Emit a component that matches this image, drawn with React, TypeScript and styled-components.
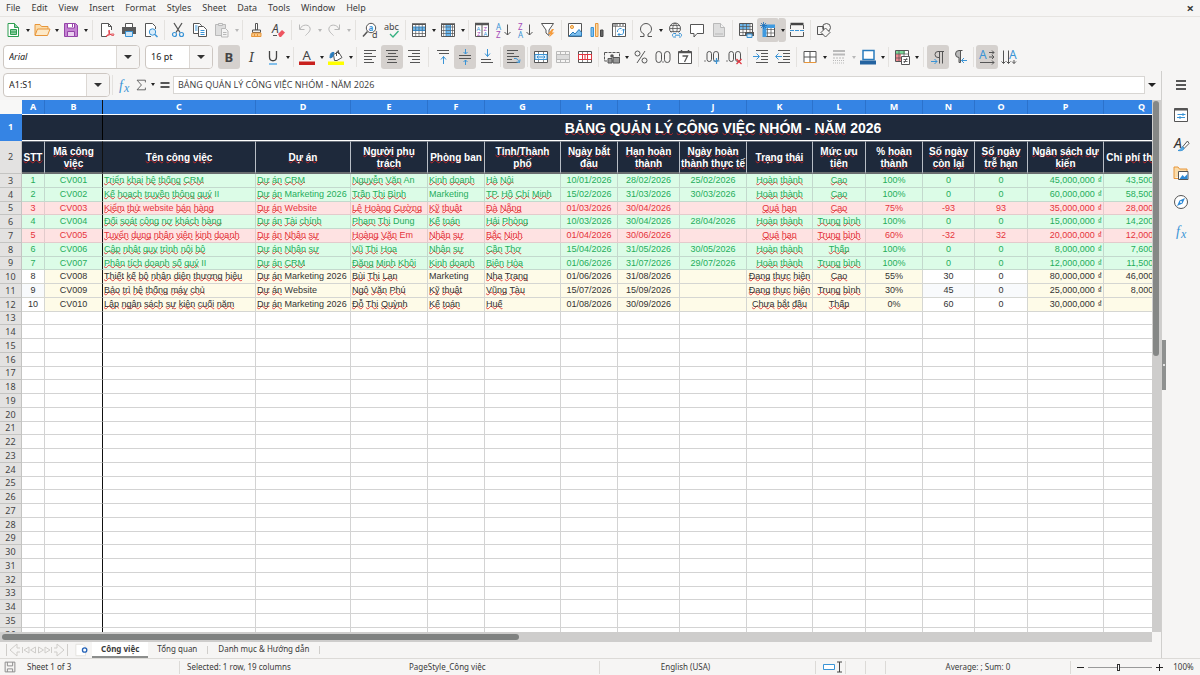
import React from "react";
import styled, { createGlobalStyle, css } from "styled-components";

const GlobalStyle = createGlobalStyle`
  * { box-sizing: border-box; }
  html, body, #root { height: 100%; margin: 0; }
  body {
    background: #f6f5f4;
    color: #3a3a3a;
    font: 9px/12px "Noto Sans", sans-serif;
    overflow: hidden;
  }
  button, input { font: inherit; color: inherit; }
  button { border: 0; padding: 0; background: none; }
`;

const ui = {
  line: "#dcdad7",
  active: "#d5d1ce",
  ink: "#555555",
  blue: "#3a94d6",
  accent: "#3584e4",
  navy: "#1e293b",
};

/* ---------- icons ---------- */

const K = ui.ink;
const B = ui.blue;
const F = "#b9b9b9";

const lines = (rows: [number, number, number][], color = K) =>
  rows.map(([x, y, w], i) => <path key={i} d={`M${x} ${y}.5h${w}`} stroke={color} />);

const icons: Record<string, React.ReactNode> = {
  new: (
    <>
      <path d="M3 1.500h6.500l4 4v9H3z" fill="#fff" stroke="#2f9e52" />
      <path d="M9.500 1.500v4h4" fill="#8fd0a3" stroke="#2f9e52" />
      <path d="M5.500 7.500h6v5h-6zM5.500 10h6" fill="#8fd0a3" stroke="#2f9e52" />
    </>
  ),
  open: (
    <>
      <path d="M1 13V2.500h5l1.500 2H14V7" fill="#fbdcaa" stroke="#e8963a" />
      <path d="M1 13.500 3.500 7H16l-2.500 6.500z" fill="#fde9c8" stroke="#e8963a" />
    </>
  ),
  save: (
    <>
      <path d="M1.500 1.500h11l2 2v11h-13z" fill="#c583d3" stroke="#9544a8" />
      <path d="M4.500 1.500h7v4.500h-7z" fill="#fff" stroke="#9544a8" />
      <path d="M4.500 9.500h7v5h-7z" fill="#ead0f0" stroke="#9544a8" />
      <path d="M9.500 2v3" stroke="#9544a8" />
    </>
  ),
  pdf: (
    <>
      <path d="M8 14.500H2.500v-13h7l3 3V8" fill="#fff" stroke={K} />
      <path d="M9.500 1.500v3h3" stroke={K} />
      <path d="M7 14.500c3-2 4-4.500 3.500-6-1-1.500-1.500 2 1 4 2 1.500 4 1 3.500 0s-4-.500-8 2z" stroke="#e0353f" />
    </>
  ),
  print: (
    <>
      <path d="M4.500 5V1.500h7V5" fill="#fff" stroke={K} />
      <path d="M1 5h14v7H1z" fill="#5a5a5a" />
      <path d="M4.500 9.500h7v5h-7z" fill="#cfe6f7" stroke={B} />
    </>
  ),
  preview: (
    <>
      <path d="M8 14.500H2.500v-13h7l3 3V7" fill="#fff" stroke={K} />
      <circle cx="9.500" cy="10" r="3.200" fill="#d8ecfa" stroke={B} />
      <path d="m12 12.500 2.500 2.500" stroke={B} strokeWidth="1.500" />
    </>
  ),
  cut: (
    <>
      <path d="M4 1l6 9.500M12 1 6 10.500" stroke={K} strokeWidth="1.300" />
      <circle cx="4.500" cy="12.500" r="2" stroke={B} strokeWidth="1.200" />
      <circle cx="11.500" cy="12.500" r="2" stroke={B} strokeWidth="1.200" />
    </>
  ),
  copy: (
    <>
      <path d="M1.500 1.500h6l2 2v8h-8z" fill="#fff" stroke={K} />
      <path d="M6.500 4.500h5l3 3v7h-8z" fill="#fff" stroke={K} />
      <path d="M3 4h2.500M3 6h2.500M3 8h2.500M8.500 8.500h4M8.500 10.500h4M8.500 12.500h4" stroke={B} />
    </>
  ),
  paste: (
    <>
      <path d="M1.500 2.500h10v11h-10z" fill="#dedede" stroke={F} />
      <path d="M4.500 1.500h4v2h-4z" fill="#eee" stroke={F} />
      <path d="M7.500 6.500h4l2.500 2.500v6H7.500z" fill="#f4f4f4" stroke={F} />
      <path d="M9 10.500h3.500M9 12.500h3.500" stroke={F} />
    </>
  ),
  brush: (
    <>
      <path d="M7.500 1.500h2V8h-2z" fill="#fff" stroke={K} />
      <path d="M4.500 8h8v2.500h-8z" fill="#eee" stroke={K} />
      <path d="M4 11h9v3.500H3.500z" fill="#fbc987" stroke="#e8963a" />
      <path d="M6.500 12v2.500M9.500 12v2.500" stroke="#e8963a" />
    </>
  ),
  clear: (
    <>
      <text x="2" y="11" fontSize="12" fontStyle="italic" fill="#444">A</text>
      <path d="m8 12 4-4 3 2.500-4 4.500h-1.500z" fill="#ee5560" />
      <path d="M3 13.500h4" stroke={K} />
    </>
  ),
  undo: <path d="M2.500 2.500v5h5M3 7c2-5 9-5 10-1 .800 3-2 5-4.500 7.500" stroke="#b8b8b8" />,
  redo: <path d="M13.500 2.500v5h-5M13 7C11 2 4 2 3 6c-.800 3 2 5 4.500 7.500" stroke="#b8b8b8" />,
  find: (
    <>
      <circle cx="9" cy="6" r="4.700" fill="#fff" stroke={K} />
      <path d="M5.500 9.500 1 14.500" stroke={K} strokeWidth="1.500" />
      <text x="6.500" y="8.500" fontSize="8" fontWeight="bold" fill={B}>a</text>
      <text x="10" y="16" fontSize="9" fill="#444">d</text>
    </>
  ),
  spell: (
    <>
      <text x="0" y="8" fontSize="9" fill="#444">abc</text>
      <path d="m6 12 3 3 5.500-6" stroke="#35b080" strokeWidth="1.300" />
    </>
  ),
  rows: (
    <>
      <path d="M1.500 1.500h13v13h-13z" fill="#fff" />
      <path d="M1.500 5h13v4h-13z" fill="#6db7ec" />
      <path d="M4.700 2v12.500M8 2v12.500M11.300 2v12.500M1.500 11.500h13" stroke={K} strokeWidth=".7" />
      <path d="M1.500 5h13M1.500 8.500h13" stroke="#2a7cbd" strokeWidth=".8" />
      <path d="M1.500 2.500h13v12h-13z" stroke={K} />
      <path d="M1 2h14" stroke={K} strokeWidth="1.500" />
    </>
  ),
  cols: (
    <>
      <path d="M1.500 1.500h13v13h-13z" fill="#fff" />
      <path d="M6 2h4.500v12.500H6z" fill="#6db7ec" />
      <path d="M1.500 5h13M1.500 8.500h13M1.500 11.500h13M3.700 2v12.500M12.500 2v12.500" stroke={K} strokeWidth=".7" />
      <path d="M6 2v12.500M10.500 2v12.500" stroke="#2a7cbd" strokeWidth=".8" />
      <path d="M1.500 2.500h13v12h-13z" stroke={K} />
      <path d="M1 2h14" stroke={K} strokeWidth="1.500" />
    </>
  ),
  sort: (
    <>
      <path d="M1.500 1.500h13v13h-13z" fill="#fff" stroke={K} />
      <path d="M1 2h14" stroke={K} strokeWidth="2.500" />
      <path d="M8 2v12.500" stroke={K} />
      <text x="2.500" y="8.500" fontSize="6" fill={B}>A</text>
      <text x="3" y="14" fontSize="6" fill="#a44bb8">Z</text>
      <text x="9.500" y="8.500" fontSize="6" fill="#a44bb8">Z</text>
      <text x="9.500" y="14" fontSize="6" fill={B}>A</text>
    </>
  ),
  asc: (
    <>
      <text x="0" y="7.500" fontSize="8" fill={B}>A</text>
      <text x="0" y="15.500" fontSize="8" fill="#a44bb8">Z</text>
      <path d="M11.500 2.500v10.500m-3-3 3 3 3-3" stroke={K} />
    </>
  ),
  desc: (
    <>
      <text x="0" y="7.500" fontSize="8" fill="#a44bb8">Z</text>
      <text x="0" y="15.500" fontSize="8" fill={B}>A</text>
      <path d="M11.500 2.500v10.500m-3-3 3 3 3-3" stroke={K} />
    </>
  ),
  filter: (
    <>
      <path d="M1.500 1.500h12L9 8v5.500L6 11V8z" fill="#fff" stroke={K} />
      <path d="m12 7-4 5h2.500L9 15.500l5.500-5H12L14 7z" fill="#f59b3c" />
    </>
  ),
  image: (
    <>
      <path d="M1.500 1.500h13v13h-13z" fill="#fff" stroke={K} />
      <circle cx="5" cy="5" r="1.600" fill="#fbd18a" stroke="#e8963a" />
      <path d="m2 14 4-4 2 2 4-4.500 2.500 3V14z" fill="#7fc0ee" stroke="#2a7cbd" />
    </>
  ),
  chart: (
    <>
      <path d="M2 5.500h2.500v9H2z" fill="#7fc0ee" stroke={B} />
      <path d="M6.500 1.500H9v13H6.500z" fill="#fbd9a4" stroke="#e8963a" />
      <path d="M11.500 8H14v6.500h-2.500z" fill="#666" stroke="#444" />
    </>
  ),
  pivot: (
    <>
      <path d="M1.500 1.500h13v13h-13z" fill="#fff" stroke={K} />
      <path d="M2 4.500h12.500M4.500 2v12.500" stroke={K} strokeWidth=".6" />
      <path d="M2 3h12.500" stroke={K} strokeDasharray="2 1" />
      <path d="M7 12.500h3.500c1.500 0 2-1 2-2.500V7M11 8.500 12.500 7 14 8.500M8.500 11 7 12.500 8.500 14M6.500 10C6 8 8 6 10.500 6.500" stroke={B} />
    </>
  ),
  omega: <path d="M2 14.500h4V12C3.500 11 2.500 9 2.500 7a5.500 5.500 0 0 1 11 0c0 2-1 4-3.500 5v2.500h4" stroke={K} />,
  link: (
    <>
      <circle cx="8" cy="6.500" r="5.500" stroke={K} />
      <path d="M2.500 6.500h11M8 1c-3 3-3 8 0 11M8 1c3 3 3 8 0 11M3.500 3.500h9M3.500 9.500h9" stroke={K} strokeWidth=".8" />
      <path d="M4 10.500h12V16H4z" fill="#f6f5f4" />
      <path d="M9 11.500H6.500a2 2 0 0 0 0 3.500H9M12 11.500h1.500a2 2 0 0 1 0 3.500H12M8 13.200h5" stroke={B} />
    </>
  ),
  comment: <path d="M1.500 2.500h13v9H8l-3 3.500v-3.500H1.500z" fill="#fff" stroke={K} />,
  headfoot: (
    <>
      <path d="M2.500 1.500h7l4 4v9h-11z" fill="#dedede" stroke={F} />
      <path d="M9.500 1.500v4h4" fill="#f4f4f4" stroke={F} />
      <path d="M4 12h8" stroke={F} />
    </>
  ),
  printrange: (
    <>
      <path d="M1.500 1.500h10v6h-10z" fill="#6db7ec" />
      <path d="M1.500 1.500h13v12h-13z" stroke={K} />
      <path d="M1.500 4.500h13M1.500 7.500h13M1.500 10.500h13M5 1.500v12M8.500 1.500v12M12 1.500v12" stroke={K} strokeWidth=".7" />
      <path d="M7 10h9v4H7z" fill="#555" />
      <path d="M9 12h5v3.500H9z" fill="#cfe6f7" stroke={B} />
    </>
  ),
  freeze: (
    <>
      <path d="M3.500 3.500h11v11h-11z" fill="#fff" stroke={K} />
      <path d="M3.500 7.500h11M3.500 11h11M7.500 3.500v11M11 3.500v11" stroke={K} strokeWidth=".7" />
      <path d="M3 2.500h12v3.500H3zM2.500 3h4v12h-4z" fill="#3f9ae0" />
      <path d="M3.500 0v7M0 3.500h7M1 1l5 5M6 1 1 6" stroke="#2070b8" strokeWidth=".8" />
    </>
  ),
  split: (
    <>
      <path d="M1.500 2h13" stroke="#444" strokeWidth="2.500" />
      <path d="M1.500 3v4M14.500 3v4M1.500 10v4.500h13V10" stroke={K} />
      <path d="M1 8.500h14" stroke={B} strokeDasharray="4 1" />
    </>
  ),
  shapes: (
    <>
      <circle cx="10.500" cy="5.500" r="4" stroke={K} />
      <path d="M1.500 4.500h6v8h-6z" stroke={K} />
      <path d="m9.500 6 4.500 4.500L9.500 15 5 10.500z" fill="#f6f5f4" stroke={K} />
    </>
  ),
  bold: <text x="3.500" y="13" fontSize="13" fontWeight="bold" fill="#444">B</text>,
  italic: <text x="6" y="13" fontSize="13" fontStyle="italic" fontFamily="DejaVu Serif, serif" fill="#444">I</text>,
  underline: (
    <>
      <path d="M4.500 2v6c0 5 7 5 7 0V2" stroke="#444" strokeWidth="1.300" />
      <path d="M4 15h8" stroke="#5eaee8" strokeWidth="1.500" />
    </>
  ),
  fontcolor: (
    <>
      <text x="3.500" y="11" fontSize="13" fill="#444">A</text>
      <path d="M0 12.500h16v3.500H0z" fill="#c9211e" />
    </>
  ),
  fill: (
    <>
      <path d="m5.500 5.500 5-2.500 3.500 5.500-5 3H6.500z" fill="#fff" stroke={K} />
      <path d="M10.500 5V1.500L8.500 3v4" stroke={K} />
      <path d="M2 9c0-4 1-6 4-5.500L4.500 8z" fill="#2a7cbd" stroke="#2a7cbd" />
      <path d="M0 12.500h16v3.500H0z" fill="#ffff00" />
    </>
  ),
  alignl: lines([[2, 1, 12], [2, 4, 8], [2, 7, 12], [2, 10, 8], [2, 13, 10]]),
  alignc: lines([[2, 1, 12], [4, 4, 8], [2, 7, 12], [4, 10, 8], [3, 13, 10]]),
  alignr: lines([[2, 1, 12], [6, 4, 8], [2, 7, 12], [6, 10, 8], [4, 13, 10]]),
  top: (
    <>
      {lines([[2, 1, 12], [4, 4, 10]])}
      <path d="M8.500 15V7.500m-2.500 3 2.500-3 2.500 3" stroke={B} />
    </>
  ),
  middle: (
    <>
      {lines([[2, 6, 12], [2, 9, 12]])}
      <path d="M8.500 0v5m-2-2 2 2 2-2M8.500 16v-5m-2 2 2-2 2 2" stroke={B} />
    </>
  ),
  bottom: (
    <>
      {lines([[2, 10, 10], [2, 13, 12]])}
      <path d="M8.500 0v7.500m-2.500-3 2.500 3 2.500-3" stroke={B} />
    </>
  ),
  wrap: (
    <>
      {lines([[1, 1, 11], [1, 4, 7], [1, 7, 12], [1, 10, 5], [1, 13, 11]])}
      <path d="M8 9.500c3-.5 4 1 5.500 4m-3-.500 3 .5.500-3" stroke={B} />
    </>
  ),
  merge: (
    <>
      <path d="M1.500 2.500h13v11h-13z" fill="#fff" stroke={K} />
      <path d="M5.500 2.500v11M10.500 2.500v11M1.500 5.500h13M1.500 10.500h13" stroke={K} strokeWidth=".7" />
      <path d="M2 5.500h12v5H2z" fill="#e3f1fb" stroke={B} />
      <path d="M4 8h8M5.500 6.500 4 8l1.500 1.500M10.500 6.500 12 8l-1.500 1.500" stroke={B} />
    </>
  ),
  unmerge: (
    <>
      <path d="M1.500 2.500h13v11h-13zM5.500 2.500v11M10.500 2.500v11M1.500 5.500h13M1.500 10.500h13" stroke={F} />
      <path d="M2 6h12v4H2z" fill="#dcdcdc" />
    </>
  ),
  splitcells: (
    <>
      <path d="M1.500 2.500h13v11h-13z" fill="#fff" stroke={K} />
      <path d="M5.500 2.500v11M10.500 2.500v11" stroke={K} strokeWidth=".7" />
      <path d="M1.500 5.500h13v5h-13zM5.500 5.500v5M8 5.500v5M10.500 5.500v5" stroke="#e0353f" />
    </>
  ),
  currency: (
    <>
      <path d="M.5 3.500h15V12H.500z" stroke={K} strokeDasharray="3 1" />
      <circle cx="8" cy="7" r="1.800" fill={K} />
      <path d="M4 9.500h4V14H4zM9 8.500h6.500V14H9z" fill="#999" stroke={K} />
    </>
  ),
  percent: (
    <>
      <circle cx="4.500" cy="4.500" r="2.500" stroke={K} />
      <circle cx="11.500" cy="11.500" r="2.500" stroke={K} />
      <path d="M12 2 4 14" stroke={K} />
    </>
  ),
  number: (
    <>
      <rect x="1" y="2.500" width="5.500" height="11" rx="2.700" stroke={K} />
      <rect x="9.500" y="2.500" width="5.500" height="11" rx="2.700" stroke={K} />
      <circle cx="8" cy="13" r=".7" fill={K} />
    </>
  ),
  date: (
    <>
      <path d="M1.500 2.500h13v12h-13z" fill="#fff" stroke={K} />
      <path d="M1.500 3.500h13M4.500 1v3M11.500 1v3" stroke={K} strokeWidth="1.500" />
      <path d="M5.500 7h5l-3 6" stroke={K} strokeWidth="1.300" />
    </>
  ),
  adddec: (
    <>
      <circle cx="1" cy="12" r=".7" fill={K} />
      <rect x="3" y="2.500" width="4.500" height="10" rx="2.200" stroke={K} />
      <rect x="9.500" y="2.500" width="5" height="10" rx="2.400" stroke={K} />
      <path d="M12.500 9v6M9.500 12h6" stroke={B} strokeWidth="1.200" />
    </>
  ),
  deldec: (
    <>
      <circle cx="1" cy="12" r=".7" fill={K} />
      <rect x="3" y="2.500" width="4.500" height="10" rx="2.200" stroke={K} />
      <rect x="9.500" y="2.500" width="5" height="10" rx="2.400" stroke={K} />
      <path d="m10.500 10 5 5m0-5-5 5" stroke="#e0353f" strokeWidth="1.200" />
    </>
  ),
  indent: (
    <>
      {lines([[3, 1, 12], [8, 4, 7], [8, 7, 7], [8, 10, 7], [3, 13, 12]])}
      <path d="M0 7.500h6m-2.500-3 3 3-3 3" stroke={B} />
    </>
  ),
  outdent: (
    <>
      {lines([[3, 1, 12], [8, 4, 7], [8, 7, 7], [8, 10, 7], [3, 13, 12]])}
      <path d="M7 7.500H1m2.500-3-3 3 3 3" stroke={B} />
    </>
  ),
  borders: (
    <>
      <path d="M2 2.500h12v11H2zM8 2.500v11M2 8h12" fill="#fff" stroke={K} />
      <path d="M2 13.500h12" stroke="#e8963a" />
    </>
  ),
  borderstyle: (
    <>
      <path d="M2 2h12M2 5.500h12" stroke={F} strokeWidth="2" />
      <path d="M2 9h12" stroke={F} strokeDasharray="2 1" />
      <path d="M2 11.500h12M2 14h12" stroke={F} strokeDasharray="1 1" />
    </>
  ),
  bordercolor: (
    <>
      <path d="M3 1.500h11v9H3z" fill="#fff" stroke="#2a7cbd" strokeWidth="1.500" />
      <path d="M0 11.500h16v4H0z" fill="#2463a0" />
    </>
  ),
  conditional: (
    <>
      <path d="M1.500 1.500h13v11h-13z" fill="#fff" />
      <path d="M2 2h9v3H2z" fill="#7bd897" />
      <path d="M2 5h5v7.500H2z" fill="#f08a91" />
      <path d="M1.500 1.500h13v11h-13z" stroke={K} />
      <path d="M1.500 5h13M1.500 9h13M5 1.500v11M10 1.500v11" stroke={K} strokeWidth=".7" />
      <path d="M7.500 7.500h8v8h-8z" fill="#fff" stroke={K} />
      <path d="M9.500 10.500h4M9.500 12.500h4M13 9l-3 5" stroke={K} strokeWidth=".9" />
    </>
  ),
  ltr: (
    <>
      <path d="M14 2.500H8a3 3 0 0 0 0 6h1M9.500 2.500v12M12.500 2.500v12" stroke={K} />
      <path d="M1 12.500h6m-2.500-2.500L7 12.500 4.500 15" stroke={B} />
    </>
  ),
  rtl: (
    <>
      <path d="M8.500 1.500v12H7V8.500a3.500 3.500 0 0 1 0-7h3.500" fill="#bbb" stroke={K} />
      <path d="M15 11.500H9.500M12 9l-2.500 2.500L12 14" stroke={B} />
    </>
  ),
  texth: (
    <>
      <text x="0" y="10" fontSize="12" fill={B}>A</text>
      <path d="M10 3.500h5m-2-2 2 2-2 2M10 8h5m-2-2 2 2-2 2M1 13.500h14m-2-2 2 2-2 2" stroke={K} />
    </>
  ),
  textv: (
    <>
      <text x="8" y="10" fontSize="12" fill={B}>A</text>
      <path d="M2.500 1.500v13m-2-2 2 2 2-2M7.500 1.500v13m-2-2 2 2 2-2M13 11v3.500m-2-2 2 2 2-2" stroke={K} />
    </>
  ),
  fx: (
    <>
      <text x="3" y="13" fontSize="14" fontStyle="italic" fontFamily="Liberation Serif, serif" fill={B}>f</text>
      <text x="8" y="15" fontSize="12" fontStyle="italic" fontFamily="Liberation Serif, serif" fill={B}>x</text>
    </>
  ),
  sigma: <path d="M13 5V2.500H3.500L8.500 8l-5 5.500H13V11" stroke={K} />,
  equals: <path d="M3.500 6h9M3.500 10h9" stroke={K} strokeWidth="1.800" />,
  hamburger: <path d="M3 4h10M3 8h10M3 12h10" stroke="#222" strokeWidth="1.500" />,
  properties: (
    <>
      <path d="M1.500 1.500h13v13h-13z" fill="#fff" stroke={K} />
      <path d="M1.500 2.500h13" stroke={K} strokeWidth="2" />
      <path d="M4.500 7.500h8M4 10.500h8M10 6v3M7 9v3" stroke={B} />
    </>
  ),
  styles: (
    <>
      <text x="1" y="12" fontSize="14" fontStyle="italic" fill="#333">A</text>
      <path d="m14.500 5-5 6 1.500 1.500 5-5z" fill="#fff" stroke={K} />
      <path d="M5 14.500c3 .5 6 0 6-2.500L9.500 11C8 11 8.500 14 5 14.500z" fill="#5eaee8" stroke={B} />
    </>
  ),
  gallery: (
    <>
      <path d="M1 13.500V2h4l1.500 2H14v3M1 13.500h4" fill="#fbdcaa" stroke="#e8963a" />
      <path d="M5.500 6.500h9.500v8H5.500z" fill="#fff" stroke={K} />
      <path d="m6.500 14 3-4 2 2 3-3v5z" fill="#2f8ad6" />
    </>
  ),
  navigator: (
    <>
      <circle cx="8" cy="8" r="6.500" fill="#fff" stroke={K} />
      <path d="m12 4-2.500 5.500L4 12l2.500-5.500z" fill="#2f8ad6" />
      <circle cx="8" cy="8" r="1" fill="#fff" />
    </>
  ),
  floppy: (
    <path d="M1.500 1.500h13v13h-13zM4.500 1.500v5h7v-5M4.500 14.500v-4h7v4" stroke="#8c8c8c" strokeWidth="1.300" />
  ),
  first: <path d="M1.500 2v12M12 2 5 8l7 6v-4h3M12 2v4h3" stroke="#cfcdca" />,
  prev: <path d="M8 5 3 8l5 3zM14.500 5l-5 3 5 3zM1.500 5v6" stroke="#cfcdca" />,
  next: <path d="m1.500 5 5 3-5 3zM8 5l5 3-5 3zM14.500 5v6" stroke="#cfcdca" />,
  last: <path d="M14.500 2v12M4 2l7 6-7 6v-4H1M4 2v4H1" stroke="#cfcdca" />,
  addsheet: (
    <>
      <path d="M1 1.500h8l3 3v10H1z" fill="#fff" stroke="#e2e0dd" />
      <circle cx="11" cy="8" r="2.500" fill="#fff" stroke="#2463b8" strokeWidth="1.500" />
    </>
  ),
};

const Svg = styled.svg<{ $size: number }>`
  display: block;
  flex: none;
  width: ${(p) => p.$size}px;
  height: ${(p) => p.$size}px;
  fill: none;
  overflow: visible;
`;

const Icon = ({ name, size = 16 }: { name: string; size?: number }) => (
  <Svg $size={size} viewBox="0 0 16 16" aria-hidden="true">{icons[name]}</Svg>
);

/* ---------- menu and tool bars ---------- */

const Window = styled.div`
  display: flex;
  flex-direction: column;
  height: 100vh;
`;

const MenuBar = styled.nav`
  display: flex;
  gap: 11px;
  height: 17px;
  padding: 0 6px;
  border-bottom: 1px solid #e6e4e1;
`;

const MenuButton = styled.button`
  &:last-child { margin-left: auto; font-size: 13px; font-weight: bold; }
`;

const ToolBar = styled.div<{ $tall?: boolean }>`
  display: flex;
  align-items: center;
  height: ${(p) => (p.$tall ? 28 : 26)}px;
  padding-left: ${(p) => (p.$tall ? 3 : 2)}px;
`;

const ToolButton = styled.button<{ $on?: boolean }>`
  display: flex;
  align-items: center;
  justify-content: center;
  flex: none;
  width: 22px;
  height: 24px;
  border-radius: 3px;
  background: ${(p) => (p.$on ? ui.active : "none")};
`;

const ArrowButton = styled.button<{ $dim?: boolean; $on?: boolean; $wide?: boolean }>`
  display: flex;
  align-items: center;
  justify-content: center;
  flex: none;
  width: ${(p) => (p.$wide ? 14 : 7)}px;
  height: 24px;
  border-radius: 0 3px 3px 0;
  background: ${(p) => (p.$on ? ui.active : "none")};
  &::after {
    content: "";
    border: solid transparent;
    border-width: ${(p) => (p.$wide ? "4px 4px 0" : "3px 2px 0")};
    border-top-color: ${(p) => (p.$dim ? "#b8b8b8" : "#222")};
  }
`;

const Separator = styled.span<{ $wide?: boolean }>`
  flex: none;
  width: 1px;
  height: 20px;
  margin: 0 ${(p) => (p.$wide ? 3 : 2)}px;
  background: #e4e2df;
`;

type Tool = { icon: string; label: string; on?: boolean; menu?: boolean; dim?: boolean } | "|" | "||";

const t = (icon: string, label: string, flags = ""): Tool => ({
  icon,
  label,
  on: flags.includes("on"),
  menu: flags.includes("menu"),
  dim: flags.includes("dim"),
});

const standardTools: Tool[] = [
  t("new", "New", "menu"), t("open", "Open", "menu"), t("save", "Save", "menu"), "||",
  t("pdf", "Export as PDF"), t("print", "Print"), t("preview", "Print Preview"), "|",
  t("cut", "Cut"), t("copy", "Copy"), t("paste", "Paste", "menu dim"), "|",
  t("brush", "Clone Formatting"), t("clear", "Clear Formatting"), "|",
  t("undo", "Undo", "menu dim"), t("redo", "Redo", "menu dim"), "||",
  t("find", "Find and Replace"), t("spell", "Spelling"), "|",
  t("rows", "Row", "menu"), t("cols", "Column", "menu"), "|",
  t("sort", "Sort"), t("asc", "Sort Ascending"), t("desc", "Sort Descending"), t("filter", "AutoFilter"), "|",
  t("image", "Insert Image"), t("chart", "Insert Chart"), t("pivot", "Pivot Table"), "|",
  t("omega", "Special Character", "menu"), t("link", "Hyperlink"), t("comment", "Comment"),
  t("headfoot", "Headers and Footers", "dim"), "|",
  t("printrange", "Print Range"), t("freeze", "Freeze Rows and Columns", "on menu"), t("split", "Split Window"), "|",
  t("shapes", "Draw Functions"),
];

const formatTools: Tool[] = [
  t("bold", "Bold", "on"), t("italic", "Italic"), t("underline", "Underline", "menu"), "|",
  t("fontcolor", "Font Color", "menu"), t("fill", "Background Color", "menu"), "|",
  t("alignl", "Align Left"), t("alignc", "Center Horizontally", "on"), t("alignr", "Align Right"), "||",
  t("top", "Align Top"), t("middle", "Center Vertically", "on"), t("bottom", "Align Bottom"), "|",
  t("wrap", "Wrap Text", "on"), "|",
  t("merge", "Merge and Center", "on"), t("unmerge", "Merge Cells", "dim"), t("splitcells", "Unmerge Cells"), "|",
  t("currency", "Currency", "menu"), t("percent", "Percent"), t("number", "Number"), t("date", "Date"), "|",
  t("adddec", "Add Decimal Place"), t("deldec", "Delete Decimal Place"), "|",
  t("indent", "Increase Indent"), t("outdent", "Decrease Indent"), "|",
  t("borders", "Borders", "menu"), t("borderstyle", "Border Style", "menu dim"),
  t("bordercolor", "Border Color", "menu"), "|",
  t("conditional", "Conditional", "menu"), "||",
  t("ltr", "Left-To-Right", "on"), t("rtl", "Right-To-Left"), "|",
  t("texth", "Text Left to Right", "on"), t("textv", "Text Top to Bottom"),
];

const Tools = ({ items }: { items: Tool[] }) => (
  <>
    {items.map((item, i) =>
      typeof item === "string" ? (
        <Separator key={i} $wide={item === "||"} />
      ) : (
        <React.Fragment key={i}>
          <ToolButton $on={item.on} disabled={item.dim} aria-label={item.label} aria-pressed={item.on}>
            <Icon name={item.icon} />
          </ToolButton>
          {item.menu && <ArrowButton $dim={item.dim} $on={item.on} aria-label={`${item.label} options`} />}
        </React.Fragment>
      )
    )}
  </>
);

const Combo = styled.div<{ $width: number }>`
  display: flex;
  flex: none;
  width: ${(p) => p.$width}px;
  height: 24px;
  border: 1px solid #cdc7c2;
  border-radius: 4px;
  background: #fff;
  overflow: hidden;
`;

const ComboInput = styled.input<{ $italic?: boolean }>`
  flex: 1;
  min-width: 0;
  border: 0;
  padding: 0 5px;
  background: none;
  color: #222;
  font-style: ${(p) => (p.$italic ? "italic" : "normal")};
`;

const ComboButton = styled.button`
  display: flex;
  align-items: center;
  justify-content: center;
  width: 23px;
  border-left: 1px solid #dcd8d4;
  background: #f6f5f4;
  &::after {
    content: "";
    border: solid transparent;
    border-width: 4px 4px 0;
    border-top-color: #333;
  }
`;

const ComboBox = ({ label, value, width, italic }: { label: string; value: string; width: number; italic?: boolean }) => (
  <Combo $width={width}>
    <ComboInput aria-label={label} defaultValue={value} $italic={italic} />
    <ComboButton aria-label={`${label} list`} />
  </Combo>
);

const FormatFields = styled.div`
  display: flex;
  flex: none;
  gap: 5px;
  margin-right: 5px;
`;

const FormulaBar = styled.div`
  display: flex;
  align-items: center;
  height: 29px;
  padding: 0 2px 2px 3px;
`;

const SlimButton = styled(ToolButton)`
  width: 16px;
  margin-left: 1px;
`;

const FormulaInput = styled.input`
  flex: 1;
  min-width: 0;
  height: 18px;
  padding: 0 4px;
  border: 1px solid #d8d6d3;
  background: #fff;
  font-family: "Open Sans", "Noto Sans", sans-serif;
`;

/* ---------- work area ---------- */

const WorkArea = styled.div`
  display: flex;
  flex: 1;
  min-height: 0;
`;

const Main = styled.main`
  display: flex;
  flex-direction: column;
  flex: 1;
  min-width: 0;
`;

const SheetArea = styled.div`
  display: flex;
  flex: 1;
  min-height: 0;
`;

const SheetView = styled.div`
  flex: 1;
  min-width: 0;
  overflow: hidden;
  background: #fff;
`;

const VScroll = styled.div`
  flex: none;
  width: 9px;
  padding: 1px 2px 0 1px;
  background: #cecdcc;
`;

const VThumb = styled.div`
  height: 48%;
  border-radius: 3px;
  background: #858786;
`;

const HScroll = styled.div`
  height: 10px;
  margin-right: 9px;
  padding: 2px;
  background: #cecdcc;
`;

const HThumb = styled.div`
  width: 45%;
  height: 6px;
  border-radius: 3px;
  background: #7f8180;
`;

const SideBar = styled.aside`
  display: flex;
  flex: none;
  width: 39px;
  border-left: 1px solid #d0cfcd;
`;

const Splitter = styled.div`
  align-self: center;
  display: flex;
  align-items: center;
  justify-content: center;
  width: 4px;
  height: 50px;
  background: #8f9190;
  &::after {
    content: "";
    width: 2px;
    height: 2px;
    border-radius: 1px;
    background: #fff;
  }
`;

const Decks = styled.div`
  display: flex;
  flex: 1;
  flex-direction: column;
  align-items: center;
  gap: 5px;
  padding: 2px 4px 0 0;
  ${ToolButton}:first-child { margin-bottom: 1px; }
`;

/* ---------- the sheet ---------- */

const widths = [22, 23, 58, 153, 95, 77, 57, 76, 57, 62, 67, 66, 53, 57, 52, 53, 76, 76, 122, 122];
const letters = "ABCDEFGHIJKLMNOPQ".split("");

const Table = styled.table`
  width: 1424px;
  table-layout: fixed;
  border-collapse: separate;
  border-spacing: 0;
  tr > :nth-child(3) { border-right-color: #111; }
`;

const Col = styled.col<{ $w: number }>`
  width: ${(p) => p.$w}px;
`;

const Corner = styled.td`
  padding: 0;
  background: #f8f8f7;
`;

const ColumnLetter = styled.th`
  height: 14px;
  padding: 0;
  border-right: 1px solid #2b72cc;
  background: ${ui.accent};
  color: #fff;
  font-weight: bold;
`;

const RowNumber = styled.th<{ $on?: boolean }>`
  padding: 0;
  border: solid #c4c4c2;
  border-width: 0 1px 1px 0;
  background: #e3e2e1;
  color: #444;
  font-weight: normal;
  ${(p) => p.$on && css`
    background: ${ui.accent};
    border-color: ${ui.accent};
    color: #fff;
    font-weight: bold;
  `}
`;

const sheetFont = css`
  font-family: "Liberation Sans", Arial, sans-serif;
  white-space: nowrap;
`;

const TitleCell = styled.td`
  ${sheetFont}
  height: 27px;
  padding: 0;
  border: solid #fff;
  border-width: 1px 0;
  background: linear-gradient(90deg, ${ui.navy} 80px, #000 80px 81px, ${ui.navy} 81px);
  color: #fff;
  font-size: 14px;
  line-height: 16px;
  font-weight: bold;
  text-align: center;
`;

const HeadCell = styled.th`
  ${sheetFont}
  height: 33px;
  padding: 2px 0 0;
  border: solid #b8bdc5;
  border-width: 1px 1px 2px 0;
  border-top-color: #6b727d;
  border-bottom-color: #6a6d70;
  background: ${ui.navy};
  color: #fff;
  font-size: 10px;
  line-height: 12px;
  white-space: pre-line;
`;

const BodyRow = styled.tr`
  height: 14px;
  &:nth-child(4n + 3) { height: 13px; }
`;

type Status = "done" | "late" | "open";
const tones: Record<Status, { bg: string; ink: string; line: string }> = {
  done: { bg: "#dcfce7", ink: "#25ad5b", line: "#c3d9cd" },
  late: { bg: "#fee2e2", ink: "#e5343b", line: "#e3cbcc" },
  open: { bg: "#fefbe8", ink: "#333333", line: "#d5d6d2" },
};

const Cell = styled.td<{ $status?: Status; $align?: string; $plain?: boolean; $tint?: boolean }>`
  ${sheetFont}
  padding: 0 1px;
  border: solid #d3d3d3;
  border-width: 0 1px 1px 0;
  line-height: 11px;
  text-align: ${(p) => p.$align ?? "left"};
  ${(p) => p.$status && css`
    background: ${p.$plain ? (p.$tint ? "#f8fafc" : "#fff") : tones[p.$status].bg};
    border-color: ${tones[p.$status].line};
    color: ${tones[p.$status].ink};
  `}
`;

const Misspelled = styled.span`
  text-decoration: underline wavy rgba(222, 36, 36, 0.85) 1px;
  text-decoration-skip-ink: none;
  text-underline-offset: -2px;
`;

const knownWords = /^([-–%\d.,/:]+|II|website|Website|Marketing|2026|An|Dung|Em|ban|Chi|₫|[-\d,]+%?|CV\d+)$/;

const Spelled = ({ text }: { text: string }) => (
  <>
    {text.split(/(\s+)/).map((word, i) =>
      /^\s+$/.test(word) || knownWords.test(word) ? word : <Misspelled key={i}>{word}</Misspelled>
    )}
  </>
);

const headings = [
  "STT", "Mã công\nviệc", "Tên công việc", "Dự án", "Người phụ\ntrách", "Phòng ban", "Tỉnh/Thành\nphố",
  "Ngày bắt\nđầu", "Hạn hoàn\nthành", "Ngày hoàn\nthành thực tế", "Trạng thái", "Mức ưu\ntiên",
  "% hoàn\nthành", "Số ngày\ncòn lại", "Số ngày\ntrễ hạn", "Ngân sách dự\nkiến", "Chi phí thực tế", "", "",
];

const tasks: [Status, string][] = [
  ["done", "1|CV001|Triển khai hệ thống CRM|Dự án CRM|Nguyễn Văn An|Kinh doanh|Hà Nội|10/01/2026|28/02/2026|25/02/2026|Hoàn thành|Cao|100%|0|0|45,000,000 ₫|43,500,000 ₫"],
  ["done", "2|CV002|Kế hoạch truyền thông quý II|Dự án Marketing 2026|Trần Thị Bình|Marketing|TP. Hồ Chí Minh|15/02/2026|31/03/2026|30/03/2026|Hoàn thành|Cao|100%|0|0|60,000,000 ₫|58,500,000 ₫"],
  ["late", "3|CV003|Kiểm thử website bán hàng|Dự án Website|Lê Hoàng Cường|Kỹ thuật|Đà Nẵng|01/03/2026|30/04/2026||Quá hạn|Cao|75%|-93|93|35,000,000 ₫|28,000,000 ₫"],
  ["done", "4|CV004|Đối soát công nợ khách hàng|Dự án Tài chính|Phạm Thị Dung|Kế toán|Hải Phòng|10/03/2026|30/04/2026|28/04/2026|Hoàn thành|Trung bình|100%|0|0|15,000,000 ₫|14,200,000 ₫"],
  ["late", "5|CV005|Tuyển dụng nhân viên kinh doanh|Dự án Nhân sự|Hoàng Văn Em|Nhân sự|Bắc Ninh|01/04/2026|30/06/2026||Quá hạn|Trung bình|60%|-32|32|20,000,000 ₫|12,000,000 ₫"],
  ["done", "6|CV006|Cập nhật quy trình nội bộ|Dự án Nhân sự|Vũ Thị Hoa|Nhân sự|Cần Thơ|15/04/2026|31/05/2026|30/05/2026|Hoàn thành|Thấp|100%|0|0|8,000,000 ₫|7,600,000 ₫"],
  ["done", "7|CV007|Phân tích doanh số quý II|Dự án CRM|Đặng Minh Khôi|Kinh doanh|Biên Hòa|01/06/2026|31/07/2026|29/07/2026|Hoàn thành|Trung bình|100%|0|0|12,000,000 ₫|11,500,000 ₫"],
  ["open", "8|CV008|Thiết kế bộ nhận diện thương hiệu|Dự án Marketing 2026|Bùi Thị Lan|Marketing|Nha Trang|01/06/2026|31/08/2026||Đang thực hiện|Cao|55%|30|0|80,000,000 ₫|46,000,000 ₫"],
  ["open", "9|CV009|Bảo trì hệ thống máy chủ|Dự án Website|Ngô Văn Phú|Kỹ thuật|Vũng Tàu|15/07/2026|15/09/2026||Đang thực hiện|Trung bình|30%|45|0|25,000,000 ₫|8,000,000 ₫"],
  ["open", "10|CV010|Lập ngân sách sự kiện cuối năm|Dự án Marketing 2026|Đỗ Thị Quỳnh|Kế toán|Huế|01/08/2026|30/09/2026||Chưa bắt đầu|Thấp|0%|60|0|30,000,000 ₫|"],
];

const alignOf = (col: number) => (col >= 15 ? "right" : col >= 2 && col <= 6 ? "left" : "center");
const plainColumns = [0, 13, 14];

const Sheet = () => (
  <Table>
    <colgroup>{widths.map((w, i) => <Col key={i} $w={w} />)}</colgroup>
    <thead>
      <tr>
        <Corner />
        {letters.map((l) => <ColumnLetter key={l} scope="col">{l}</ColumnLetter>)}
        <ColumnLetter /><ColumnLetter />
      </tr>
      <tr>
        <RowNumber $on scope="row">1</RowNumber>
        <TitleCell colSpan={19}><Spelled text="BẢNG QUẢN LÝ CÔNG VIỆC NHÓM - NĂM 2026" /></TitleCell>
      </tr>
      <tr>
        <RowNumber scope="row">2</RowNumber>
        {headings.map((h, i) => <HeadCell key={i}><Spelled text={h} /></HeadCell>)}
      </tr>
    </thead>
    <tbody>
      {Array.from({ length: 34 }, (_, r) => {
        const task = tasks[r];
        const values = task ? task[1].split("|") : [];
        return (
          <BodyRow key={r}>
            <RowNumber scope="row">{r + 3}</RowNumber>
            {widths.slice(1).map((_w, c) => (
              <Cell
                key={c}
                $status={task?.[0]}
                $align={alignOf(c)}
                $plain={task?.[0] === "open" && plainColumns.includes(c)}
                $tint={r % 2 === 0}
              >
                {values[c] && <Spelled text={values[c]} />}
              </Cell>
            ))}
          </BodyRow>
        );
      })}
    </tbody>
  </Table>
);

/* ---------- sheet tabs and status bar ---------- */

const TabBar = styled.div`
  display: flex;
  align-items: stretch;
  height: 16px;
  padding-left: 5px;
  font-size: 8px;
`;

const TabNav = styled.div`
  display: flex;
  align-items: center;
  margin-right: 6px;
`;

const AddSheet = styled.button`
  margin-right: 3px;
`;

const Tab = styled.button<{ $on?: boolean }>`
  padding: 0 9px;
  border-bottom: 2px solid transparent;
  ${(p) => p.$on && css`
    background: #fff;
    border-color: #8c8e8d;
    font-weight: bold;
  `}
`;

const TabSeparator = styled.span`
  align-self: center;
  width: 1px;
  height: 8px;
  margin: 0 1px;
  background: #d0cecb;
`;

const StatusBar = styled.footer`
  display: grid;
  grid-template-columns: 20px 160px 222px 1fr 171px 45px 30px 20px 20px 185px 96px 33px;
  align-items: center;
  height: 17px;
  border-top: 1px solid ${ui.line};
  font-size: 8px;
`;

const StatusField = styled.div<{ $center?: boolean; $line?: boolean }>`
  display: flex;
  align-items: center;
  justify-content: ${(p) => (p.$center ? "center" : "flex-start")};
  height: 13px;
  padding-left: ${(p) => (p.$center ? 0 : 7)}px;
  border-right: ${(p) => (p.$line ? `1px solid ${ui.line}` : 0)};
  white-space: nowrap;
`;

const ZoomField = styled.div`
  display: flex;
  align-items: center;
  justify-content: space-between;
  gap: 4px;
  padding: 0 4px 0 6px;
`;

const ZoomButton = styled.button<{ $plus?: boolean }>`
  width: 7px;
  height: 7px;
  background:
    linear-gradient(#222, #222) center / 7px 1px no-repeat,
    linear-gradient(#222, #222) center / ${(p) => (p.$plus ? "1px 7px" : "0 0")} no-repeat;
`;

const ZoomSlider = styled.input`
  appearance: none;
  flex: 1;
  min-width: 0;
  height: 8px;
  margin: 0;
  background: linear-gradient(#9a9a9a, #9a9a9a) center / 100% 1px no-repeat;
  &::-webkit-slider-thumb {
    appearance: none;
    width: 3px;
    height: 7px;
    border: 1px solid #333;
    background: #fff;
  }
`;

const ModeIcon = () => (
  <svg width="20" height="12" viewBox="0 0 20 12" fill="none" aria-hidden="true">
    <path d="M.500 3.500h11v5H.500z" stroke="#3a94d6" fill="#fff" />
    <path d="M14 1h5M16.500 1v10M14 11h5" stroke="#444" />
  </svg>
);

const menus = ["File", "Edit", "View", "Insert", "Format", "Styles", "Sheet", "Data", "Tools", "Window", "Help"];
const decks = [
  ["hamburger", "Sidebar Settings"], ["properties", "Properties"], ["styles", "Styles"],
  ["gallery", "Gallery"], ["navigator", "Navigator"], ["fx", "Functions"],
];

export default function App() {
  return (
    <Window>
      <GlobalStyle />
      <MenuBar>
        {menus.map((m) => <MenuButton key={m}>{m}</MenuButton>)}
        <MenuButton aria-label="Close document">×</MenuButton>
      </MenuBar>
      <ToolBar><Tools items={standardTools} /></ToolBar>
      <ToolBar $tall>
        <FormatFields>
          <ComboBox label="Font name" value="Arial" width={137} italic />
          <ComboBox label="Font size" value="16 pt" width={68} />
        </FormatFields>
        <Tools items={formatTools} />
      </ToolBar>
      <WorkArea>
        <Main>
          <FormulaBar>
            <ComboBox label="Name box" value="A1:S1" width={107} />
            <Separator />
            <SlimButton aria-label="Function wizard"><Icon name="fx" /></SlimButton>
            <SlimButton aria-label="Select function"><Icon name="sigma" size={14} /></SlimButton>
            <ArrowButton aria-label="Select function options" />
            <SlimButton aria-label="Formula"><Icon name="equals" /></SlimButton>
            <FormulaInput aria-label="Input line" defaultValue="BẢNG QUẢN LÝ CÔNG VIỆC NHÓM - NĂM 2026" />
            <ArrowButton $wide aria-label="Expand formula bar" />
          </FormulaBar>
          <SheetArea>
            <SheetView><Sheet /></SheetView>
            <VScroll><VThumb /></VScroll>
          </SheetArea>
          <HScroll><HThumb /></HScroll>
          <TabBar>
            <TabNav>
              {["first", "prev", "next", "last"].map((n) => (
                <button key={n} aria-label={`${n} sheet`}><Icon name={n} /></button>
              ))}
            </TabNav>
            <AddSheet aria-label="Add sheet"><Icon name="addsheet" size={14} /></AddSheet>
            <Tab $on>Công việc</Tab>
            <Tab>Tổng quan</Tab>
            <TabSeparator />
            <Tab>Danh mục &amp; Hướng dẫn</Tab>
            <TabSeparator />
          </TabBar>
        </Main>
        <SideBar>
          <Splitter />
          <Decks>
            {decks.map(([icon, label]) => (
              <ToolButton key={icon} aria-label={label}><Icon name={icon} /></ToolButton>
            ))}
          </Decks>
        </SideBar>
      </WorkArea>
      <StatusBar>
        <StatusField $center><Icon name="floppy" size={12} /></StatusField>
        <StatusField $line>Sheet 1 of 3</StatusField>
        <StatusField>Selected: 1 row, 19 columns</StatusField>
        <StatusField $line>PageStyle_Công việc</StatusField>
        <StatusField $center>English (USA)</StatusField>
        <StatusField $line />
        <StatusField $line><ModeIcon /></StatusField>
        <StatusField $line />
        <StatusField $line />
        <StatusField $line $center>Average: ; Sum: 0</StatusField>
        <ZoomField>
          <ZoomButton aria-label="Zoom out" />
          <ZoomSlider type="range" aria-label="Zoom" min={0} max={100} defaultValue={48} />
          <ZoomButton $plus aria-label="Zoom in" />
        </ZoomField>
        <StatusField $center>100%</StatusField>
      </StatusBar>
    </Window>
  );
}
